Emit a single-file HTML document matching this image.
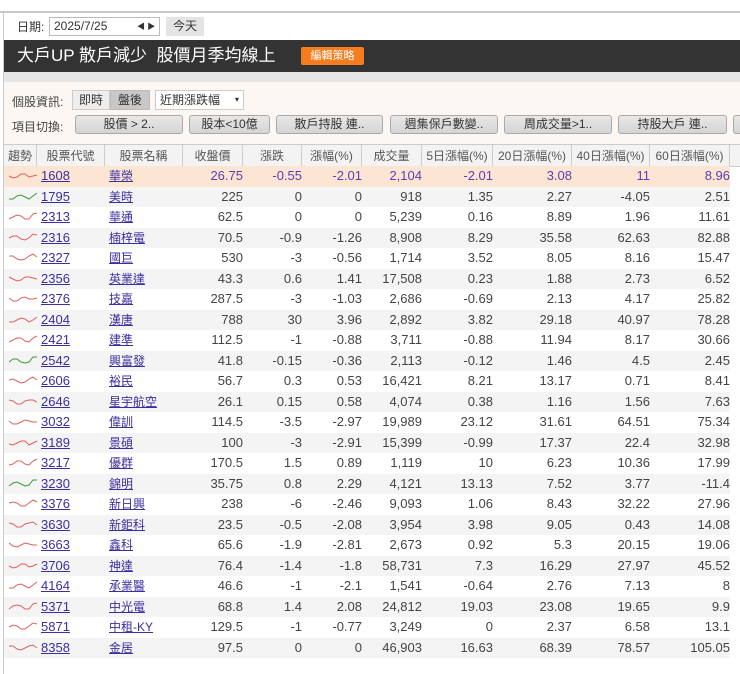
<!DOCTYPE html>
<html><head><meta charset="utf-8"><style>
*{margin:0;padding:0;box-sizing:border-box}
body{width:740px;height:674px;background:#fff;font-family:"Liberation Sans","Noto Sans CJK TC",sans-serif;font-size:12px;color:#444;position:relative;overflow:hidden}
.abs{position:absolute}
.btn{position:absolute;top:115px;height:19px;background:linear-gradient(#e8e8e8,#d4d4d4);border:1px solid #aaa;border-radius:3px;text-align:center;line-height:17px;font-size:12px;color:#333}
.row{position:absolute;left:4px;width:726px;height:20.5px;line-height:20.5px}
.row span{position:absolute;top:0}
.r{text-align:right}
.hd{position:absolute;top:144px;height:23px;line-height:22px;text-align:center;border-right:1px solid #ccc;font-size:12px;color:#555;background:#f3f3f3;border-bottom:1px solid #ccc;border-top:1px solid #ccc}
a{color:#3a2fa0;text-decoration:underline}
</style></head><body>
<div class="abs" style="left:0;top:11px;width:740px;height:2px;background:#c8c8c8"></div>
<div class="abs" style="left:3px;top:13px;width:1px;height:661px;background:#ccc"></div>
<div class="abs" style="left:17px;top:18px;font-size:12px;color:#333">日期:</div>
<div class="abs" style="left:49px;top:17px;width:111px;height:19px;border:1px solid #bbb;background:#fff;padding-left:4px;line-height:17px;font-size:12px;color:#333">2025/7/25<span style="position:absolute;left:87px;font-size:8px">◀ ▶</span></div>
<div class="abs" style="left:166px;top:17px;width:38px;height:19px;background:#e4e4e4;text-align:center;line-height:19px;color:#333">今天</div>
<div class="abs" style="left:4px;top:40px;width:736px;height:32px;background:#333"></div>
<div class="abs" style="left:17px;top:44px;font-size:17px;color:#fff;line-height:24px;white-space:nowrap">大戶UP 散戶減少&nbsp; 股價月季均線上</div>
<div class="abs" style="left:301px;top:47px;width:63px;height:18px;background:#f57c1f;border-radius:2px;color:#fff;font-size:11px;text-align:center;line-height:18px">編輯策略</div>
<div class="abs" style="left:4px;top:72px;width:736px;height:10px;background:#e6e6e6"></div>
<div class="abs" style="left:4px;top:82px;width:736px;height:62px;background:#fcf7f3"></div>
<div class="abs" style="left:12px;top:93px;color:#444">個股資訊:</div>
<div class="abs" style="left:72px;top:90px;width:38px;height:20px;background:#eee;border:1px solid #ccc;text-align:center;line-height:18px;color:#333">即時</div>
<div class="abs" style="left:110px;top:90px;width:40px;height:20px;background:#c8c8c8;border:1px solid #bbb;text-align:center;line-height:18px;color:#333">盤後</div>
<div class="abs" style="left:155px;top:90px;width:89px;height:20px;background:#fff;border:1px solid #ccc;padding-left:4px;line-height:18px;color:#333">近期漲跌幅<span style="position:absolute;right:4px;font-size:8px">▾</span></div>
<div class="abs" style="left:12px;top:118px;color:#444">項目切換:</div>
<div class="btn" style="left:75px;width:108px">股價 &gt; 2..</div>
<div class="btn" style="left:189px;width:81px">股本&lt;10億</div>
<div class="btn" style="left:276px;width:107px">散戶持股 連..</div>
<div class="btn" style="left:390px;width:108px">週集保戶數變..</div>
<div class="btn" style="left:504px;width:108px">周成交量&gt;1..</div>
<div class="btn" style="left:618px;width:109px">持股大戶 連..</div>
<div class="btn" style="left:733px;width:20px"></div>
<div class="hd" style="left:4px;width:33px">趨勢</div>
<div class="hd" style="left:37px;width:68px">股票代號</div>
<div class="hd" style="left:105px;width:78px">股票名稱</div>
<div class="hd" style="left:183px;width:60px">收盤價</div>
<div class="hd" style="left:243px;width:59px">漲跌</div>
<div class="hd" style="left:302px;width:60px">漲幅(%)</div>
<div class="hd" style="left:362px;width:60px">成交量</div>
<div class="hd" style="left:422px;width:71px">5日漲幅(%)</div>
<div class="hd" style="left:493px;width:79px">20日漲幅(%)</div>
<div class="hd" style="left:572px;width:78px">40日漲幅(%)</div>
<div class="hd" style="left:650px;width:80px">60日漲幅(%)</div>
<div class="hd" style="left:730px;width:10px;border-right:none"></div>
<div id="rows"></div>
<script>
var d=[["1608","華榮","26.75","-0.55","-2.01","2,104","-2.01","3.08","11","8.96"],
["1795","美時","225","0","0","918","1.35","2.27","-4.05","2.51"],
["2313","華通","62.5","0","0","5,239","0.16","8.89","1.96","11.61"],
["2316","楠梓電","70.5","-0.9","-1.26","8,908","8.29","35.58","62.63","82.88"],
["2327","國巨","530","-3","-0.56","1,714","3.52","8.05","8.16","15.47"],
["2356","英業達","43.3","0.6","1.41","17,508","0.23","1.88","2.73","6.52"],
["2376","技嘉","287.5","-3","-1.03","2,686","-0.69","2.13","4.17","25.82"],
["2404","漢唐","788","30","3.96","2,892","3.82","29.18","40.97","78.28"],
["2421","建準","112.5","-1","-0.88","3,711","-0.88","11.94","8.17","30.66"],
["2542","興富發","41.8","-0.15","-0.36","2,113","-0.12","1.46","4.5","2.45"],
["2606","裕民","56.7","0.3","0.53","16,421","8.21","13.17","0.71","8.41"],
["2646","星宇航空","26.1","0.15","0.58","4,074","0.38","1.16","1.56","7.63"],
["3032","偉訓","114.5","-3.5","-2.97","19,989","23.12","31.61","64.51","75.34"],
["3189","景碩","100","-3","-2.91","15,399","-0.99","17.37","22.4","32.98"],
["3217","優群","170.5","1.5","0.89","1,119","10","6.23","10.36","17.99"],
["3230","錦明","35.75","0.8","2.29","4,121","13.13","7.52","3.77","-11.4"],
["3376","新日興","238","-6","-2.46","9,093","1.06","8.43","32.22","27.96"],
["3630","新鉅科","23.5","-0.5","-2.08","3,954","3.98","9.05","0.43","14.08"],
["3663","鑫科","65.6","-1.9","-2.81","2,673","0.92","5.3","20.15","19.06"],
["3706","神達","76.4","-1.4","-1.8","58,731","7.3","16.29","27.97","45.52"],
["4164","承業醫","46.6","-1","-2.1","1,541","-0.64","2.76","7.13","8"],
["5371","中光電","68.8","1.4","2.08","24,812","19.03","23.08","19.65","9.9"],
["5871","中租-KY","129.5","-1","-0.77","3,249","0","2.37","6.58","13.1"],
["8358","金居","97.5","0","0","46,903","16.63","68.39","78.57","105.05"]];
var green={"1795":1,"2542":1,"3230":1};
var rights=[239,298,358,418,489,568,646,726];
var h="";
d.forEach(function(r,i){
 var top=166+i*20.5;
 var bg=i==0?"#fde5d3":(i%2?"#f4f4f4":"#fff");
 var col=i==0?"#5a3fb0":"#444";
 var c=green[r[0]]?"#3a9a3a":"#e06060";
 var pts="";for(var k=0;k<8;k++){pts+=(3+k*4)+","+(10+Math.round(Math.sin(k*1.3+i)*2.5-(k>5?2:0)))+" ";}
 h+='<div class="row" style="top:'+top+'px;background:'+bg+';color:'+col+'">';
 h+='<svg style="position:absolute;left:2px;top:0" width="34" height="20"><polyline points="'+pts+'" fill="none" stroke="'+c+'" stroke-width="1"/></svg>';
 h+='<span style="left:37px;font-size:13px"><a>'+r[0]+'</a></span>';
 h+='<span style="left:105px"><a>'+r[1]+'</a></span>';
 for(var j=2;j<10;j++){h+='<span class="r" style="right:'+(730-rights[j-2]-4)+'px;font-size:13px">'+r[j]+'</span>';}
 h+='</div>';
});
document.getElementById("rows").innerHTML=h;
</script>
</body></html>
